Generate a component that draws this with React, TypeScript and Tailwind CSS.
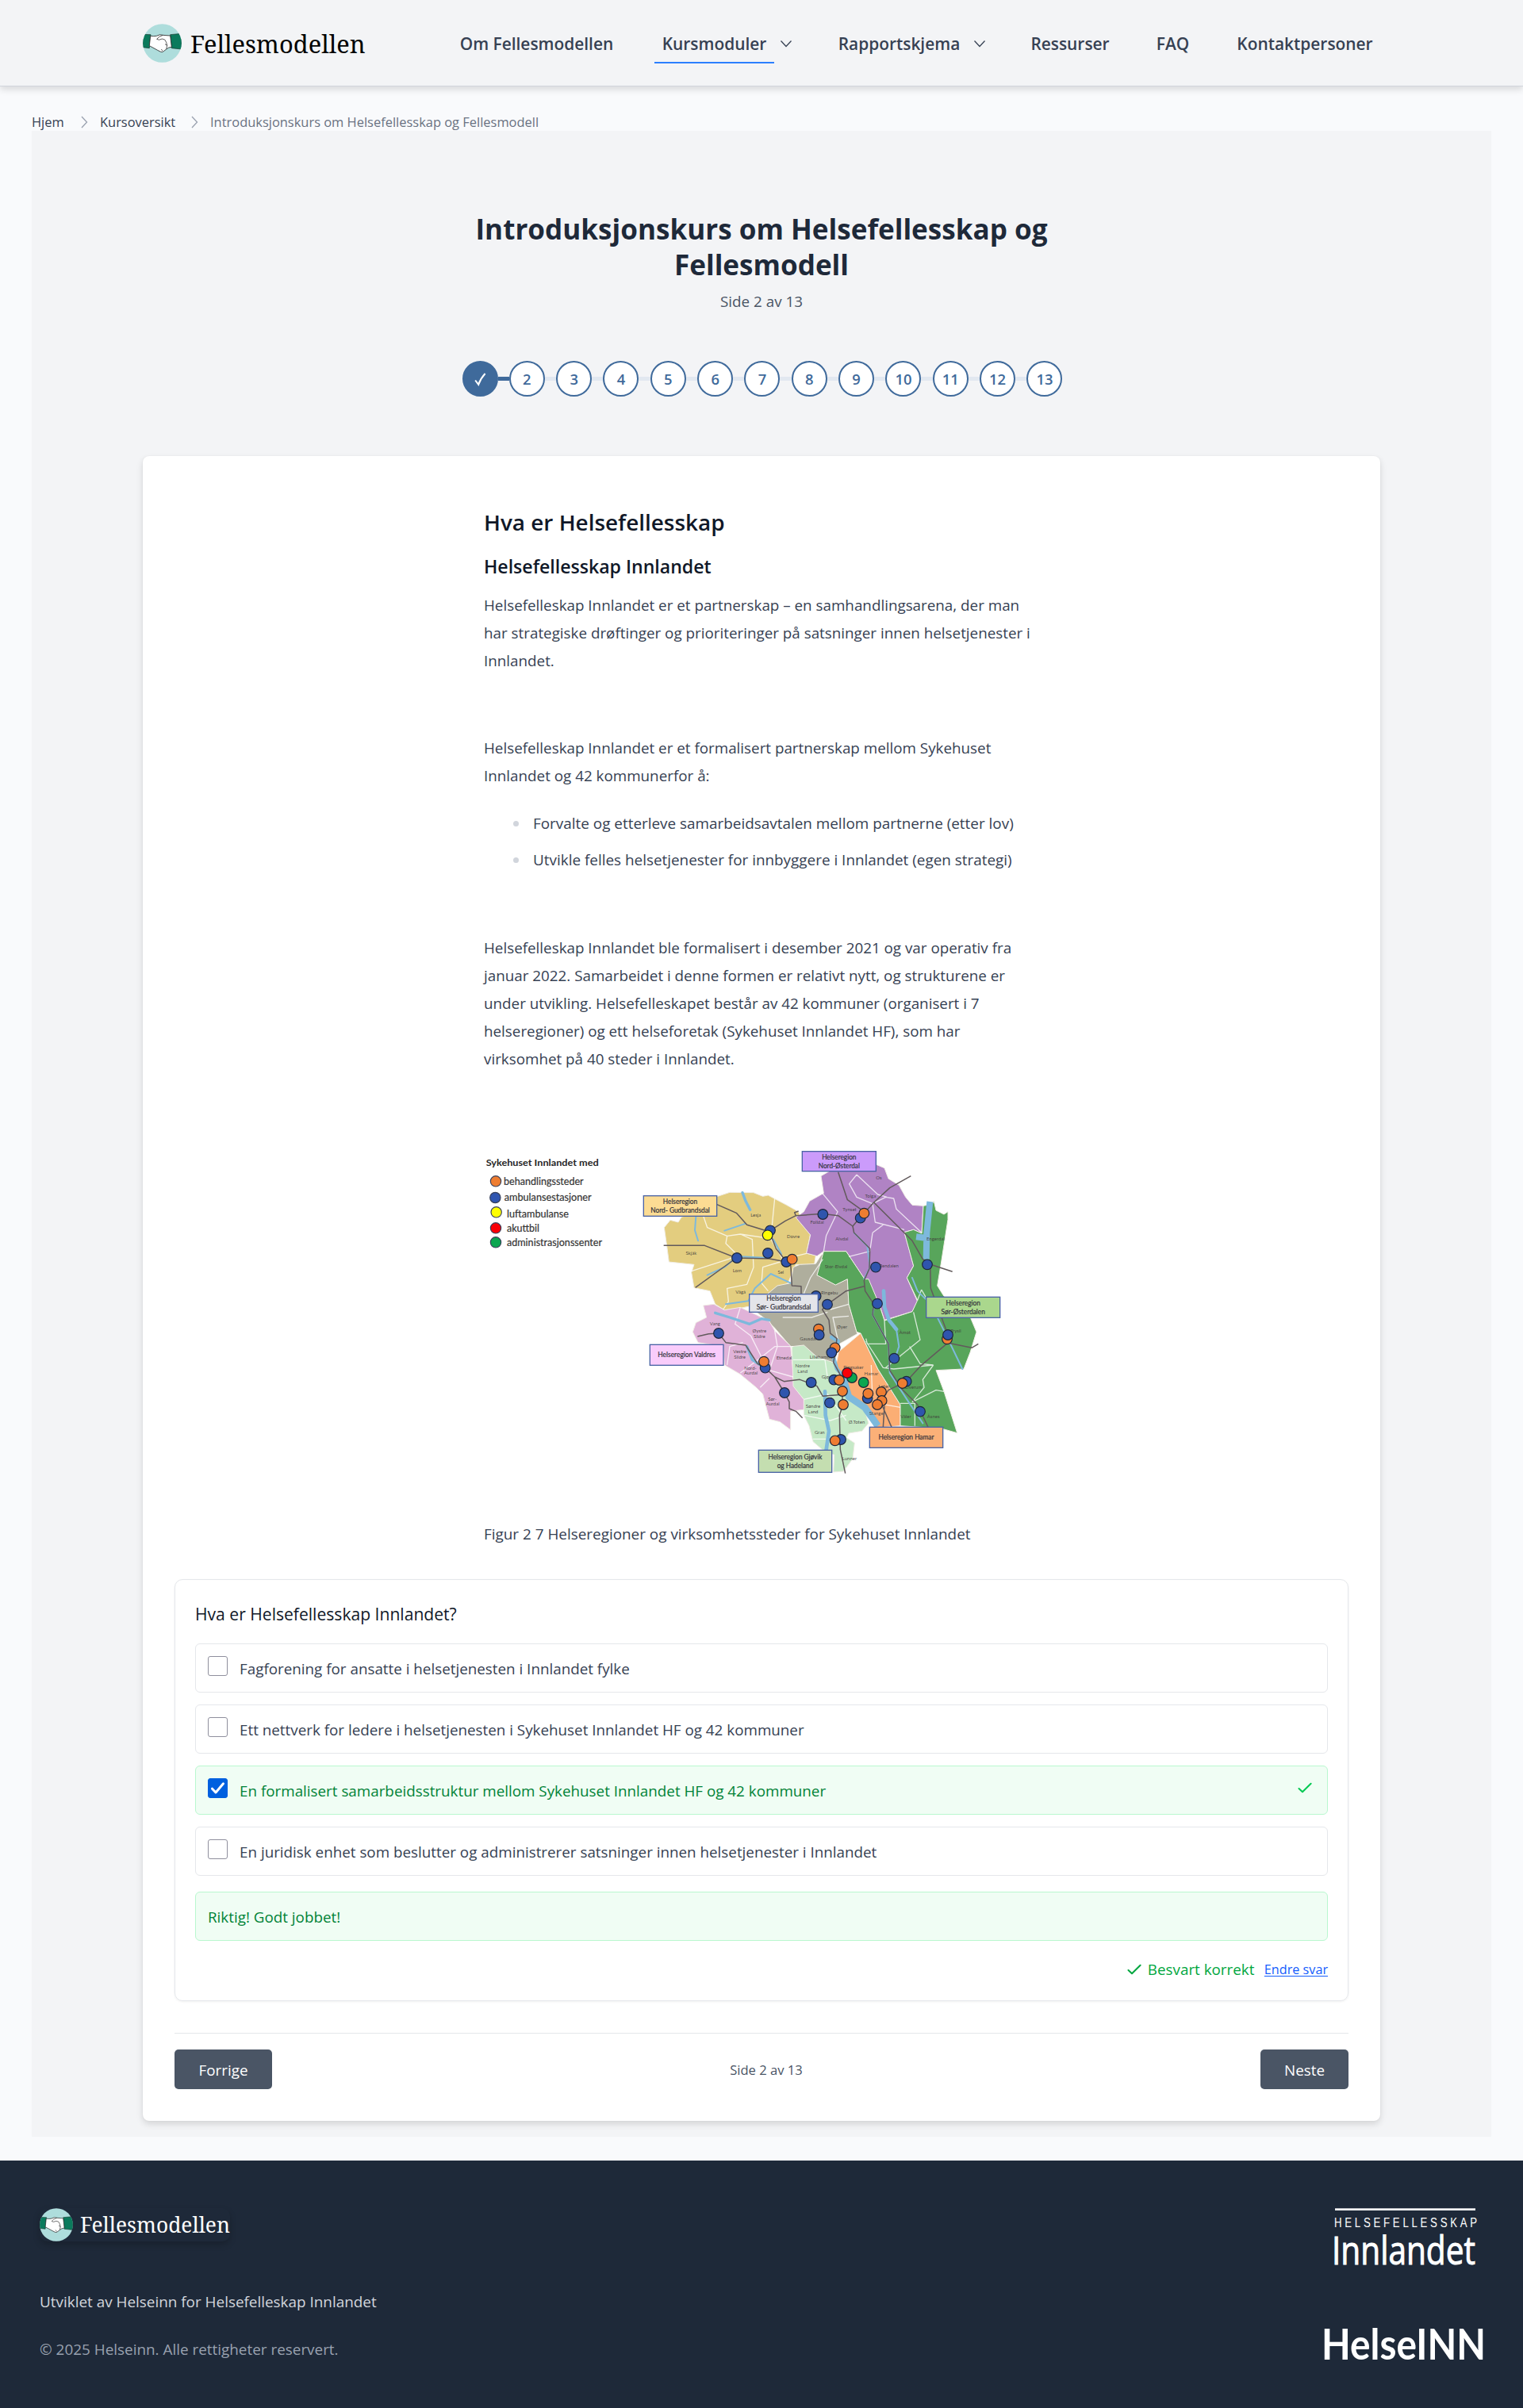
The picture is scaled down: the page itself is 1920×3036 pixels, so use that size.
import React from "react";

const NAV = [
  { label: "Om Fellesmodellen", width: "w-[215px]" },
  { label: "Kursmoduler", width: "w-[151px]", active: true, menu: true },
  { label: "Rapportskjema", width: "w-[173px]", menu: true },
  { label: "Ressurser", width: "w-[116px]" },
  { label: "FAQ", width: "w-[61px]" },
  { label: "Kontaktpersoner", width: "w-[190px]" },
];

const STEPS = Array.from({ length: 13 }, (_, i) => i + 1);

const OPTIONS = [
  { text: "Fagforening for ansatte i helsetjenesten i Innlandet fylke", correct: false },
  { text: "Ett nettverk for ledere i helsetjenesten i Sykehuset Innlandet HF og 42 kommuner", correct: false },
  { text: "En formalisert samarbeidsstruktur mellom Sykehuset Innlandet HF og 42 kommuner", correct: true },
  { text: "En juridisk enhet som beslutter og administrerer satsninger innen helsetjenester i Innlandet", correct: false },
];

function Chevron({ className }: { className: string }) {
  return (
    <svg className={className} viewBox="0 0 16 16" fill="none" stroke="currentColor" strokeWidth="1.3">
      <path d="M1.5 4.5 L8 11.5 L14.5 4.5" />
    </svg>
  );
}

function Crumb() {
  return (
    <svg className="mr-[15px] ml-[22px] h-4 w-[9px] text-gray-400" viewBox="0 0 9 16" fill="none" stroke="currentColor" strokeWidth="1.3">
      <path d="M1 1 L7.5 8 L1 15" />
    </svg>
  );
}

function Check({ className }: { className: string }) {
  return (
    <svg className={className} viewBox="0 0 18 14" fill="none" stroke="currentColor" strokeWidth="2" strokeLinecap="round" strokeLinejoin="round">
      <path d="M1.5 8 L6 12.2 L16.6 1.8" />
    </svg>
  );
}

function Handshake({ className }: { className: string }) {
  return (
    <svg className={className} viewBox="0 0 147 147">
      <defs>
        <clipPath id="disc">
          <circle cx="73.5" cy="73.5" r="73" />
        </clipPath>
      </defs>
      <g clipPath="url(#disc)">
        <rect width="147" height="147" fill="#aedddc" />
        <path d="M0 40 L30 41 L25 92 L0 89 Z" fill="#0b7a5c" stroke="#17352c" strokeWidth="2" />
        <path d="M104 41 L147 37 L147 96 L109 92 Z" fill="#0b7a5c" stroke="#17352c" strokeWidth="2" />
        <path
          d="M29 46 Q42 48 52 46 Q65 38 76 43 L104 45 L109 88 L98 90 Q86 98 80 103 Q74 109 68 106 L56 100 L25 83 Z"
          fill="#fff"
          stroke="#222"
          strokeWidth="2.4"
          strokeLinejoin="round"
        />
        <path d="M76 43 Q60 48 53 58 Q60 64 73 57 L83 60 Q90 68 92 82 L84 77 M92 82 L89 95 M70 96 L75 103" fill="none" stroke="#222" strokeWidth="2.2" />
      </g>
    </svg>
  );
}

type Pt = [number, number];

const BLUE: Pt[] = [
  [1113, 361], [1104, 447], [987, 465], [1174, 480], [918, 750], [1094, 881], [1167, 975],
  [1312, 300], [1454, 314], [1512, 500], [1707, 490], [1286, 609], [1329, 641], [1518, 638],
  [1785, 756], [1582, 845], [1628, 932], [1680, 1046], [1268, 936], [1338, 1013], [1354, 926], [1481, 996], [1380, 1152],
];
const ORANGE: Pt[] = [
  [1089, 857], [1196, 470], [1468, 296], [1374, 927], [1386, 969], [1389, 1020],
  [1483, 978], [1533, 972], [1535, 1005], [1518, 1020], [1613, 939], [1358, 1156],
];

function Pin({ at, fill }: { at: Pt; fill: string }) {
  return <circle cx={at[0]} cy={at[1]} r="19" fill={fill} stroke="#1d2638" strokeWidth="3.5" />;
}

const PLACES: [number, number, string][] = [
  [1058, 310, "Lesja"], [814, 454, "Skjåk"], [988, 519, "Lom"], [1153, 524, "Sel"], [1001, 600, "Vågå"], [1200, 391, "Dovre"],
  [904, 721, "Vang"], [1072, 746, "Øystre"], [1072, 767, "Slidre"], [998, 826, "Vestre"], [998, 847, "Slidre"], [1038, 887, "Nord-"], [1040, 907, "Aurdal"],
  [1166, 848, "Etnedal"], [1121, 1004, "Sør-"], [1122, 1024, "Aurdal"], [1524, 168, "Os"], [1492, 236, "Tolga"], [1413, 287, "Tynset"],
  [1290, 336, "Folldal"], [1384, 398, "Alvdal"], [1562, 500, "Rendalen"], [1738, 399, "Engerdal"], [1362, 504, "Stor-Elvdal"], [1337, 602, "Ringebu"],
  [1385, 733, "Øyer"], [1256, 776, "Gausdal"], [1310, 846, "Lillehammer"], [1622, 752, "Åmot"], [1815, 746, "Trysil"], [1235, 878, "Nordre"], [1235, 899, "Land"],
  [1428, 886, "Ringsaker"], [1495, 908, "Hamar"], [1275, 1032, "Søndre"], [1275, 1052, "Land"], [1440, 1091, "Ø.Toten"], [1300, 1132, "Gran"],
  [1413, 1229, "Lunner"], [1514, 1059, "Stange"], [1626, 1072, "Våler"], [1730, 1070, "Åsnes"], [1655, 960, "Elverum"], [1545, 958, "Løten"], [1332, 920, "Gjøvik"],
];

function RegionLabel({ x, y, w, h, fill, lines }: { x: number; y: number; w: number; h: number; fill: string; lines: [string, number][] }) {
  const first = lines.length === 1 ? y + h / 2 + 7 : y + h / 2 - 8;
  return (
    <g>
      <rect x={x} y={y} width={w} height={h} fill={fill} stroke="#4a63a5" strokeWidth="4" />
      {lines.map(([t, len], i) => (
        <text key={t} x={x + w / 2} y={first + i * 33} textAnchor="middle" fontSize="26" textLength={len} lengthAdjust="spacingAndGlyphs" fill="#33333c" stroke="#33333c" strokeWidth="0.6">
          {t}
        </text>
      ))}
    </g>
  );
}

const LEGEND: [string, string, number, number, number, number, number][] = [
  ["behandlingssteder", "#ee7d31", 75, 175, 105, 188, 302],
  ["ambulansestasjoner", "#2f55b0", 73, 237, 107, 248, 330],
  ["luftambulanse", "#ffff00", 77, 292, 117, 311, 234],
  ["akuttbil", "#fa0007", 75, 352, 117, 365, 123],
  ["administrasjonssenter", "#0ba650", 75, 406, 117, 420, 360],
];

function RegionMap() {
  return (
    <svg className="mt-[98px] h-[420px] w-[700px] font-['Lato',sans-serif]" viewBox="30 60 2100 1260">
      <text x="38" y="118" fontSize="35" fontWeight="700" textLength="426" lengthAdjust="spacingAndGlyphs" fill="#262626">
        Sykehuset Innlandet med
      </text>
      {LEGEND.map(([t, c, cx, cy, tx, ty, len]) => (
        <g key={t}>
          <circle cx={cx} cy={cy} r="20" fill={c} stroke="#38405a" strokeWidth="3.5" />
          <text x={tx} y={ty} fontSize="39" textLength={len} lengthAdjust="spacingAndGlyphs" fill="#333" stroke="#333" strokeWidth="0.6">
            {t}
          </text>
        </g>
      ))}

      {/* Regions */}
      <g strokeWidth="3" stroke="#f1eee6" strokeLinejoin="round">
        <path fill="#e3cd7f" d="M712 350 L735 322 L765 330 L778 310 L850 290 L905 235 L960 217 L1050 218 L1085 232 L1105 228 L1175 265 L1220 290 L1240 345 L1265 375 L1250 448 L1285 455 L1280 490 L1210 490 L1180 560 L1110 600 L1075 640 L1000 655 L940 662 L905 640 L885 590 L825 578 L815 520 L825 490 L730 480 L722 420 Z" />
        <path fill="#afae9d" d="M1200 500 L1225 490 L1285 487 L1305 455 L1316 445 L1312 470 L1290 530 L1360 566 L1405 545 L1410 640 L1442 752 L1375 790 L1355 862 L1310 855 L1270 825 L1190 800 L1130 730 L1100 700 L1060 670 L1080 620 L1140 570 L1190 560 Z" />
        <path fill="#e0b2d8" d="M860 645 L900 640 L940 662 L1000 652 L1060 680 L1110 705 L1130 740 L1190 798 L1200 900 L1205 955 L1240 1000 L1245 1038 L1190 1045 L1190 1115 L1150 1085 L1110 1075 L1085 980 L1060 955 L1000 905 L940 870 L935 800 L840 785 L820 745 L832 710 L872 690 Z" />
        <path fill="#c6e9c7" d="M1195 800 L1240 795 L1290 840 L1350 860 L1380 900 L1410 990 L1470 1040 L1485 1090 L1460 1120 L1410 1128 L1402 1145 L1432 1165 L1425 1225 L1390 1272 L1352 1275 L1355 1210 L1310 1190 L1275 1160 L1260 1100 L1240 1060 L1240 1000 L1200 950 Z" />
        <path fill="#fbae74" d="M1455 750 L1520 885 L1605 1020 L1605 1100 L1510 1108 L1480 1050 L1410 990 L1360 880 L1372 820 Z" />
        <path fill="#b083c4" d="M1210 312 L1240 290 L1262 250 L1315 220 L1305 155 L1340 135 L1510 110 L1545 125 L1560 165 L1600 190 L1625 235 L1650 265 L1692 268 L1686 372 L1655 358 L1620 368 L1635 420 L1655 495 L1630 540 L1670 630 L1650 668 L1545 700 L1525 640 L1470 545 L1400 440 L1315 440 L1290 458 L1250 447 L1265 378 Z" />
        <path fill="#58a55b" d="M1315 440 L1382 440 L1400 440 L1470 545 L1485 545 L1525 640 L1545 702 L1650 668 L1670 625 L1630 540 L1655 495 L1620 368 L1655 358 L1686 372 L1692 268 L1725 262 L1732 250 L1740 285 L1770 300 L1785 290 L1785 320 L1760 480 L1745 570 L1770 610 L1870 690 L1893 745 L1870 820 L1845 885 L1740 890 L1770 970 L1820 1127 L1760 1110 L1605 1100 L1605 1020 L1520 885 L1455 750 L1440 745 L1410 640 L1405 545 L1360 567 L1290 530 Z" />
      </g>

      {/* Municipality borders */}
      <g fill="none" stroke="#fff" strokeOpacity=".75" strokeWidth="4" strokeLinejoin="round">
        <path d="M858 300 L875 350 L950 382 L1000 375 L1115 392 L1130 240 M950 382 L945 410 L985 450 M1000 375 L1045 395 L1050 500 L1025 565 L950 580 L955 630 L935 660 M815 515 L985 460 M1115 392 L1160 470 L1250 448 M1150 480 L1085 500 L1080 560 L1105 590" />
        <path d="M1000 652 L980 715 L1040 760 L1080 840 L1130 800 L1200 800 M1010 785 L960 800 L950 870 M1130 740 L1140 800 L1110 890 L1200 915 M1080 840 L1000 900 M1110 920 L1075 955" />
        <path d="M1310 220 L1368 290 L1325 380 L1315 440 M1440 150 L1412 185 L1440 235 L1500 260 L1550 235 L1580 240 L1590 280 L1686 370 M1440 150 L1520 225 L1555 235 M1500 260 L1510 330 L1620 358 M1500 370 L1540 340 M1500 370 L1490 440 L1410 460 M1312 470 L1265 540 L1240 600 M1410 640 L1340 660 M1160 690 L1270 690 L1330 670 M1370 780 L1350 690 L1410 685" />
        <path d="M1545 702 L1550 790 L1480 790 L1475 770 M1655 670 L1680 775 L1550 880 M1640 800 L1680 865 L1730 870 M1730 870 L1690 925 L1695 955 L1650 1010 M1650 1010 L1740 965 L1770 970 M1605 1015 L1660 1015 L1660 1100 M1475 780 L1540 880 L1580 885 L1730 870 M1495 870 L1500 1010 M1520 1015 L1605 1030 M1685 585 L1670 625 M1685 585 L1705 620" />
        <path d="M1200 850 L1320 850 M1240 1000 L1330 980 L1400 1080 M1320 850 L1330 920 M1240 1060 L1340 1080 L1400 1060 M1275 1150 L1340 1150" />
      </g>

      {/* Water */}
      <g fill="none" stroke="#7db9dc" strokeLinecap="round" strokeLinejoin="round">
        <path strokeWidth="10" d="M1008 218 L1020 250 L1037 283 M905 673 L960 690 L1035 715 L1080 695 L1110 700 M1025 800 L1045 850 L1075 870" />
        <path strokeWidth="6" d="M832 308 L828 360 L840 400 M1000 460 L1110 465 M940 362 L1020 335 M945 640 L1030 628 L1055 580 L1115 525 L1190 560 M875 530 L940 500 L970 475 M1125 395 L1155 450 M1430 370 L1480 420 L1490 500 L1468 545 M1650 540 L1670 590 L1700 620 M1740 680 L1770 740 L1840 885 M1505 650 L1500 680 L1560 790 L1565 900 L1630 1000 L1690 1090 M1590 735 L1600 800 L1580 860" />
        <path strokeWidth="24" d="M1717 252 L1705 370 L1703 470 M1665 385 L1705 390" strokeLinecap="butt" />
        <path strokeWidth="14" d="M1542 590 L1545 650 L1562 700 L1590 735 M1345 765 L1370 780 L1352 840 L1365 885 L1405 930 M1320 970 L1322 1060 L1335 1120 L1325 1190" />
        <path strokeWidth="26" d="M1385 910 L1410 990 L1470 1030 L1520 1100" strokeLinecap="butt" />
      </g>

      {/* Roads */}
      <g fill="none" stroke="#625a5c" strokeWidth="4.5" strokeLinejoin="round">
        <path d="M910 262 L985 295 L1025 340 L1108 365 L1170 325 L1210 305 L1310 298 L1370 305 L1425 345 L1450 315 L1505 255 L1565 200 L1645 155 M1210 305 L1205 293 L1220 288" />
        <path d="M710 418 L865 418 L985 465 L1110 468 L1175 480 L1190 485 L1195 570 L1230 572 L1230 600 M830 577 L985 465 M1110 365 L1135 430 L1175 480" />
        <path d="M1370 140 L1405 245 L1468 290 M1505 255 L1650 400 L1690 470 L1720 490 L1802 517 M1718 490 L1720 580 L1785 755 L1780 785 L1875 805 L1900 790 M1780 790 L1680 875 L1628 932 L1560 965 L1530 1010" />
        <path d="M1425 345 L1430 370 L1490 430 L1488 505 L1468 550 L1472 590 L1505 640 L1500 680 L1560 790 L1565 890 L1610 960 L1670 1020 L1710 1105 M1468 572 L1400 590 L1329 641 L1310 660 L1335 700 L1340 750 L1365 770 L1358 830 L1352 860 L1385 920" />
        <path d="M838 762 L880 752 L918 750 L945 785 L1020 795 L1065 865 L1094 881 L1130 915 L1167 975 L1185 1010 L1185 1035 L1210 1045 L1235 1070 M1130 915 L1165 932 L1225 925 L1290 950 L1312 988 L1385 982 L1388 1020 L1375 1060 L1378 1190 L1397 1280 M1535 1020 L1572 1105 M1545 1025 L1540 1105" />
      </g>

      <g fontSize="18" fill="#403a3a" fillOpacity=".9" textAnchor="middle">
        {PLACES.map(([x, y, t]) => (
          <text key={t + x + y} x={x} y={y}>
            {t}
          </text>
        ))}
      </g>

      {BLUE.slice(0, 14).map((p) => <Pin key={p.join()} at={p} fill="#2f55ad" />)}
      <Pin at={[1782, 772]} fill="#ee7d31" />
      <Pin at={[1296, 734]} fill="#ee7d31" />
      <Pin at={[1358, 805]} fill="#ee7d31" />
      <Pin at={[1298, 756]} fill="#2f55ad" />
      <Pin at={[1345, 823]} fill="#2f55ad" />
      {BLUE.slice(14).map((p) => <Pin key={p.join()} at={p} fill="#2f55ad" />)}
      <Pin at={[1422, 918]} fill="#0ba650" />
      <Pin at={[1466, 936]} fill="#0ba650" />
      {ORANGE.map((p) => <Pin key={p.join()} at={p} fill="#ee7d31" />)}
      <Pin at={[1404, 900]} fill="#fa0007" />
      <Pin at={[1103, 379]} fill="#ffff00" />

      <RegionLabel x={634} y={230} w={277} h={77} fill="#fcdc93" lines={[["Helseregion", 130], ["Nord- Gudbrandsdal", 224]]} />
      <RegionLabel x={1234} y={62} w={279} h={75} fill="#cb9bfb" lines={[["Helseregion", 130], ["Nord-Østerdal", 156]]} />
      <RegionLabel x={1034} y={602} w={260} h={68} fill="#e4e5ea" lines={[["Helseregion", 130], ["Sør- Gudbrandsdal", 206]]} />
      <RegionLabel x={658} y={793} w={278} h={78} fill="#f9ccfb" lines={[["Helseregion Valdres", 218]]} />
      <RegionLabel x={1703} y={613} w={279} h={78} fill="#aad78d" lines={[["Helseregion", 130], ["Sør-Østerdalen", 166]]} />
      <RegionLabel x={1489} y={1105} w={277} h={78} fill="#fbb078" lines={[["Helseregion Hamar", 210]]} />
      <RegionLabel x={1069} y={1192} w={277} h={84} fill="#c4deb0" lines={[["Helseregion Gjøvik", 204], ["og Hadeland", 137]]} />
    </svg>
  );
}

export default function App() {
  return (
    <div className="flex h-[3036px] w-[1920px] flex-col bg-[#f9fafc] font-['Open_Sans','Noto_Sans',sans-serif] text-[18.82px] leading-[30px] text-gray-700">
      <header className="relative h-[109px] shrink-0 border-b border-gray-300 bg-gray-100 shadow-[0_4px_8px_rgba(0,0,0,0.13)]">
        <div className="mx-auto flex h-[109px] w-[1560px] items-center justify-between">
          <div className="flex items-center">
            <Handshake className="size-[49px]" />
            <span className="ml-[11px] font-['Noto_Serif',serif] text-[30.8px] leading-[40px] text-black">Fellesmodellen</span>
          </div>
          <nav className="flex items-center gap-[41px] text-[20.9px] font-semibold">
            {NAV.map((n) => (
              <div key={n.label} className="flex items-center">
                <a className={`flex h-[50px] items-center justify-center border-b-2 pt-[2px] whitespace-nowrap ${n.width} ${n.active ? "border-blue-500" : "border-transparent"}`}>{n.label}</a>
                {n.menu && (
                  <span className="flex w-[30px] justify-center">
                    <Chevron className="size-4" />
                  </span>
                )}
              </div>
            ))}
          </nav>
        </div>
      </header>

      <div className="flex items-center px-10 pt-8 text-[16.45px] leading-[24px]">
        <span className="w-10 pt-px text-gray-700">Hjem</span>
        <Crumb />
        <span className="w-[93px] pt-px">Kursoversikt</span>
        <Crumb />
        <span className="pt-px text-gray-500">Introduksjonskurs om Helsefellesskap og Fellesmodell</span>
      </div>

      <main className="mx-10 -mt-px h-[2529px] shrink-0 bg-gray-100 pt-[101px]">
        <h1 className="text-center text-[35.1px] leading-[45px] font-bold text-gray-800">
          Introduksjonskurs om Helsefellesskap og
          <br />
          Fellesmodell
        </h1>
        <p className="mt-[9px] text-center text-gray-600">Side 2 av 13</p>

        <ol className="mx-auto mt-[60px] flex w-[757px] translate-x-px items-center">
          {STEPS.map((n) => (
            <React.Fragment key={n}>
              {n > 1 && <li className={`h-[5px] flex-1 ${n === 2 ? "bg-[#3f6a9b]" : "bg-slate-200"}`} />}
              <li className={`flex size-[45px] shrink-0 items-center justify-center rounded-full border-2 border-[#3f6a9b] pt-px text-[18.4px] font-semibold ${n === 1 ? "bg-[#3f6a9b] text-white" : "bg-white text-[#3f6a9b]"}`}>
                {n === 1 ? (
                  <svg className="h-[17px] w-[15px]" viewBox="0 0 15 17" fill="none" stroke="currentColor" strokeWidth="2">
                    <path d="M1.2 9.5 L5.2 14.8 Q8 7 13.6 1" />
                  </svg>
                ) : (
                  n
                )}
              </li>
            </React.Fragment>
          ))}
        </ol>

        <section className="mx-auto mt-[75px] h-[2099px] w-[1560px] rounded-[8px] bg-white px-10 pt-[63px] shadow-[0_4px_8px_rgba(0,0,0,0.13),0_0_2px_rgba(0,0,0,0.06)]">
          <article className="mx-auto w-[700px] leading-[35px]">
            <h2 className="text-[27.9px] leading-[40px] font-semibold text-gray-900">Hva er Helsefellesskap</h2>
            <h3 className="mt-[19px] text-[23.1px] font-semibold text-gray-900">Helsefellesskap Innlandet</h3>
            <p className="mt-[14px] whitespace-nowrap">
              Helsefelleskap Innlandet er et partnerskap – en samhandlingsarena, der man
              <br />
              har strategiske drøftinger og prioriteringer på satsninger innen helsetjenester i
              <br />
              Innlandet.
            </p>
            <p className="mt-[75px] whitespace-nowrap">
              Helsefelleskap Innlandet er et formalisert partnerskap mellom Sykehuset
              <br />
              Innlandet og 42 kommunerfor å:
            </p>
            <ul className="mt-[25px] flex flex-col gap-[11px] pl-[37px] text-[18.9px]">
              {["Forvalte og etterleve samarbeidsavtalen mellom partnerne (etter lov)", "Utvikle felles helsetjenester for innbyggere i Innlandet (egen strategi)"].map((t) => (
                <li key={t} className="flex items-center whitespace-nowrap">
                  <span className="mr-[18px] size-[7px] rounded-full bg-gray-300" />
                  {t}
                </li>
              ))}
            </ul>
            <p className="mt-[76px] whitespace-nowrap">
              Helsefelleskap Innlandet ble formalisert i desember 2021 og var operativ fra
              <br />
              januar 2022. Samarbeidet i denne formen er relativt nytt, og strukturene er
              <br />
              under utvikling. Helsefelleskapet består av 42 kommuner (organisert i 7
              <br />
              helseregioner) og ett helseforetak (Sykehuset Innlandet HF), som har
              <br />
              virksomhet på 40 steder i Innlandet.
            </p>
            <RegionMap />
            <p className="mt-[46px] text-[18.9px]">Figur 2 7 Helseregioner og virksomhetssteder for Sykehuset Innlandet</p>
          </article>

          <div className="mt-[39px] h-[532px] rounded-[10px] border border-gray-200 px-[25px] pt-7 shadow-[0_1px_3px_rgba(0,0,0,0.06)]">
            <h4 className="text-[21.1px] text-gray-900">Hva er Helsefellesskap Innlandet?</h4>
            <div className="mt-[22px] flex flex-col gap-[15px]">
              {OPTIONS.map((o) => (
                <label key={o.text} className={`flex h-[62px] rounded-[6px] border px-[15px] pt-[15px] ${o.correct ? "border-green-200 bg-green-50 text-green-700" : "border-gray-200"}`}>
                  <span className={`mr-[15px] flex size-[25px] shrink-0 items-center justify-center rounded-[3px] border ${o.correct ? "border-[#0060df] bg-[#0060df]" : "border-[#8f8f9d] bg-white"}`}>
                    {o.correct && (
                      <svg className="size-[19px]" viewBox="0 0 19 19" fill="none" stroke="#fff" strokeWidth="3" strokeLinecap="round" strokeLinejoin="round">
                        <path d="M2.5 10.2 L7 15 L16.5 3.8" />
                      </svg>
                    )}
                  </span>
                  <span className="flex-1 pt-px">{o.text}</span>
                  {o.correct && <Check className="mt-[5px] mr-[4px] h-[14px] w-[18px] text-green-500" />}
                </label>
              ))}
            </div>
            <div className="mt-5 h-[62px] rounded-[6px] border border-green-200 bg-green-50 px-[15px] pt-4 text-green-700">Riktig! Godt jobbet!</div>
            <div className="mt-[21px] flex items-center justify-end">
              <Check className="h-[14px] w-[18px] text-green-600" />
              <span className="ml-[8px] w-[133px] whitespace-nowrap text-green-600">Besvart korrekt</span>
              <a className="ml-[14px] text-[16.2px] text-blue-600 underline underline-offset-2">Endre svar</a>
            </div>
          </div>

          <div className="mt-10 flex items-center justify-between border-t border-gray-200 pt-5">
            <button className="h-[50px] w-[123px] rounded-[5px] bg-gray-600 pt-px text-white">Forrige</button>
            <span className="pt-px text-[16.6px] text-gray-600">Side 2 av 13</span>
            <button className="h-[50px] w-[111px] rounded-[5px] bg-gray-600 pt-px text-white">Neste</button>
          </div>
        </section>
      </main>

      <footer className="mt-[30px] flex flex-1 justify-between bg-gray-800 px-[50px] pt-[60px]">
        <div>
          <div className="flex h-[42px] w-[240px] items-center rounded-[10px] shadow-[0_4px_8px_rgba(0,0,0,0.2)]">
            <Handshake className="size-[42px]" />
            <span className="ml-[9px] font-['Noto_Serif',serif] text-[26.4px] leading-[40px] text-white">Fellesmodellen</span>
          </div>
          <p className="mt-[61px] text-[18.9px] text-gray-300">Utviklet av Helseinn for Helsefelleskap Innlandet</p>
          <p className="mt-[30px] text-[18.9px] text-gray-400">© 2025 Helseinn. Alle rettigheter reservert.</p>
        </div>
        <div className="flex flex-col items-end">
          <svg className="mr-[9px] h-[74px] w-[179px] overflow-visible" viewBox="0 0 179 74" fill="#fff">
            <rect x="1" y="0.3" width="177" height="2.6" />
            <g transform="scale(.78 1)">
              <text x="0" y="24.3" fontSize="17" textLength="231" lengthAdjust="spacing" className="font-['Liberation_Sans',sans-serif]">
                HELSEFELLESSKAP
              </text>
            </g>
            <text x="-3" y="71" fontSize="49" textLength="181" lengthAdjust="spacingAndGlyphs" stroke="#fff" strokeWidth="1" className="font-['Open_Sans',sans-serif]">
              Innlandet
            </text>
          </svg>
          <svg className="mt-[76px] h-[46px] w-[202px] overflow-visible" viewBox="0 0 202 46" fill="#fff">
            <text x="-2" y="41" fontSize="54" fontWeight="700" textLength="207" lengthAdjust="spacingAndGlyphs" className="font-['Lato',sans-serif]">
              HelseINN
            </text>
          </svg>
        </div>
      </footer>
    </div>
  );
}
